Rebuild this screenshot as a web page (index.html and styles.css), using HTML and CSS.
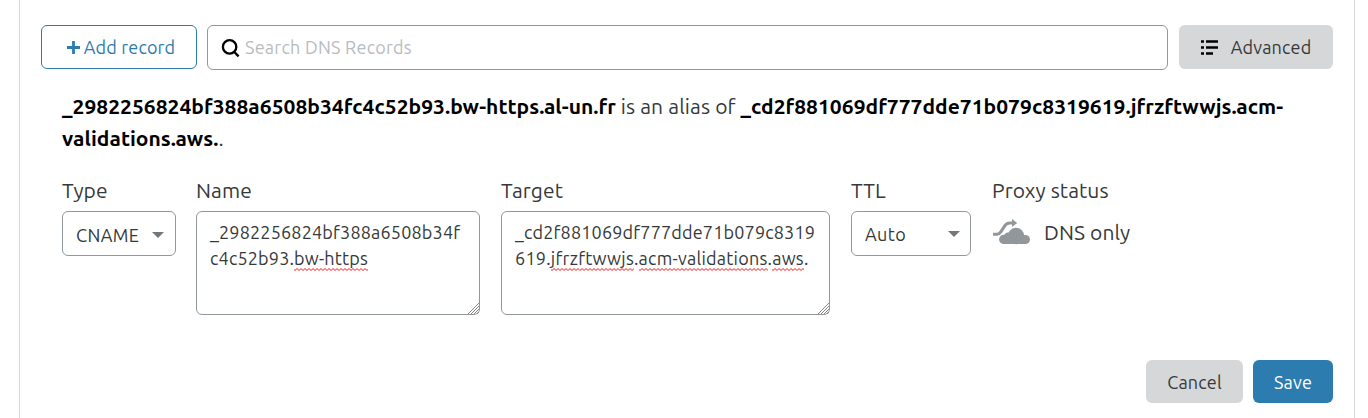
FILE: index.html
```html
<!DOCTYPE html>
<html lang="en">
<head>
<meta charset="utf-8">
<title>DNS records</title>
<link rel="stylesheet" href="styles.css">
</head>
<body>
<main class="panel">
  <div class="toolbar">
    <button class="button button-outline"><svg class="plus" viewBox="0 0 13 13"><path d="M6.5 0v13M0 6.5h13" stroke="currentColor" stroke-width="2.8"/></svg><span>Add record</span></button>
    <div class="search"><svg class="search-icon" viewBox="0 0 20 20"><circle cx="8.6" cy="8.9" r="6.7" fill="none" stroke="#000" stroke-width="2.3"/><path d="M12.8 13.5l4.8 4.8" stroke="#000" stroke-width="2.4"/></svg><span class="placeholder">Search DNS Records</span></div>
    <button class="button button-gray advanced"><svg class="list-icon" viewBox="0 0 18 16"><path d="M0 2.5h3M0 8.5h3M0 14.5h3M5 2.5h12M5 8.5h12M5 14.5h7" stroke="#000" stroke-width="2.6"/></svg><span>Advanced</span></button>
  </div>
  <p class="summary"><strong>_2982256824bf388a6508b34fc4c52b93.bw-https.al-un.fr</strong> <span class="alias">is an alias of</span> <strong>_cd2f881069df777dde71b079c8319619.jfrzftwwjs.acm-</strong><br><strong>validations.aws.</strong>.</p>
  <div class="fields">
    <div class="field type"><label>Type</label>
      <div class="select"><span>CNAME</span><svg class="caret" viewBox="0 0 12 6"><path d="M0 0h12L6 6z" fill="#72777b"/></svg></div></div>
    <div class="field name"><label>Name</label>
      <div class="area"><span>_2982256824bf388a6508b34f</span><br><span>c4c52b93.<span class="misspelt">bw-https</span></span><svg class="grip" viewBox="0 0 11 11"><path d="M0 11L11 0M3 11L11 3M6 11L11 6M9 11L11 9" stroke="#777" stroke-width=".9"/></svg></div></div>
    <div class="field target"><label>Target</label>
      <div class="area"><span>_cd2f881069df777dde71b079c8319</span><br><span class="wide">619.<span class="misspelt">jfrzftwwjs</span>.<span class="misspelt">acm-validations</span>.<span class="misspelt">aws</span>.</span><svg class="grip" viewBox="0 0 11 11"><path d="M0 11L11 0M3 11L11 3M6 11L11 6M9 11L11 9" stroke="#777" stroke-width=".9"/></svg></div></div>
    <div class="field ttl"><label>TTL</label>
      <div class="select select-auto"><span>Auto</span><svg class="caret" viewBox="0 0 12 6"><path d="M0 0h12L6 6z" fill="#72777b"/></svg></div></div>
    <div class="field proxy"><label>Proxy status</label>
      <div class="status"><svg class="cloud" viewBox="0 0 38 28"><g fill="#92979b"><circle cx="11.8" cy="20.4" r="4.7"/><circle cx="16" cy="17.8" r="4.2"/><circle cx="24" cy="17" r="8.2"/><circle cx="33.4" cy="20.5" r="4.6"/><path d="M11.8 17H33.4v8.1H11.8zM20 0l5.2 3.9-5.2 4z"/></g><path d="M1 15.2h4.2c1.8 0 2.6-.8 3.6-2.3L12 8c1.4-2.6 3-4 5.8-4H21" fill="none" stroke="#92979b" stroke-width="3.1"/></svg><span>DNS only</span></div></div>
  </div>
  <div class="actions"><button class="button button-gray cancel"><span>Cancel</span></button><button class="button button-blue save"><span>Save</span></button></div>
</main>
</body>
</html>
```
FILE: styles.css
```css
* { box-sizing: border-box; }
body { margin: 0; background: #fff; color: #36393a; font-family: Ubuntu, "Noto Sans", sans-serif; font-size: 18px; }
span, strong, label { white-space: nowrap; }
svg { display: block; flex: none; }
.panel { width: 1336px; height: 418px; margin-left: 19px; padding: 25px 21px 0; border: solid #d5d7d8; border-width: 0 1px; }
.toolbar { display: flex; gap: 10px; height: 45px; align-items: flex-start; }
.button { display: flex; align-items: center; justify-content: center; height: 44px; padding: 0; border: 0; border-radius: 6px; font: inherit; color: inherit; letter-spacing: .18px; }
.button-outline { width: 156px; gap: 4px; color: #2c7cb0; background: #fff; border: 1px solid #2c7cb0; padding-left: 4px; }
.button-gray { background: #d5d7d8; }
.button-blue { background: #2c7cb0; color: #fff; }
.plus { width: 13px; height: 13px; }
.search { width: 961px; height: 45px; display: flex; align-items: center; gap: 4px; padding-left: 13px; border: 1px solid #92979b; border-radius: 6px; color: #b9bcbe; }
.search-icon { width: 20px; height: 20px; }
.placeholder { letter-spacing: .25px; padding-bottom: 2px; }
.advanced { width: 154px; margin-left: 1px; gap: 12px; }
.list-icon { width: 18px; height: 16px; }
.summary { margin: 20px 0 0 21px; font-size: 21px; line-height: 32px; letter-spacing: .04px; }
.summary strong { color: #000; }
.alias { letter-spacing: .14px; }
.fields { display: flex; margin: 20px 0 0 21px; height: 141px; }
.field { display: flex; flex-direction: column; }
.field label { font-size: 21px; height: 37px; line-height: 32px; letter-spacing: .08px; }
.type { width: 114px; margin-right: 20px; }
.name { width: 284px; margin-right: 21px; }
.target { width: 329px; margin-right: 21px; }
.ttl { width: 120px; margin-right: 21px; }
.select { height: 45px; display: flex; align-items: center; justify-content: space-between; padding: 2px 11px 0 13px; border: 1px solid #92979b; border-radius: 6px; letter-spacing: .4px; }
.select-auto { padding: 0 10px 0 13px; }
.caret { width: 12px; height: 6px; }
.area { position: relative; height: 104px; padding: 7px 13px; border: 1px solid #92979b; border-radius: 6px; line-height: 26px; letter-spacing: .18px; }
.wide { letter-spacing: .24px; }
.grip { position: absolute; right: 0; bottom: 0; width: 11px; height: 11px; }
.misspelt { padding-bottom: 3px; background: url("data:image/svg+xml,%3Csvg xmlns='http://www.w3.org/2000/svg' width='4' height='3'%3E%3Cpath d='M-1 .5L1 2.5 3 .5 5 2.5' fill='none' stroke='%23ff0000' stroke-width='.95'/%3E%3C/svg%3E") left bottom / 4px 3px repeat-x; }
.status { display: flex; align-items: center; height: 44px; gap: 14px; font-size: 21px; letter-spacing: .1px; }
.status span { padding-bottom: 2px; }
.cloud { width: 38px; height: 28px; }
.actions { display: flex; justify-content: flex-end; gap: 10px; margin-top: 45px; }
.actions .button { height: 43px; }
.cancel { width: 97px; }
.save { width: 80px; }
```
